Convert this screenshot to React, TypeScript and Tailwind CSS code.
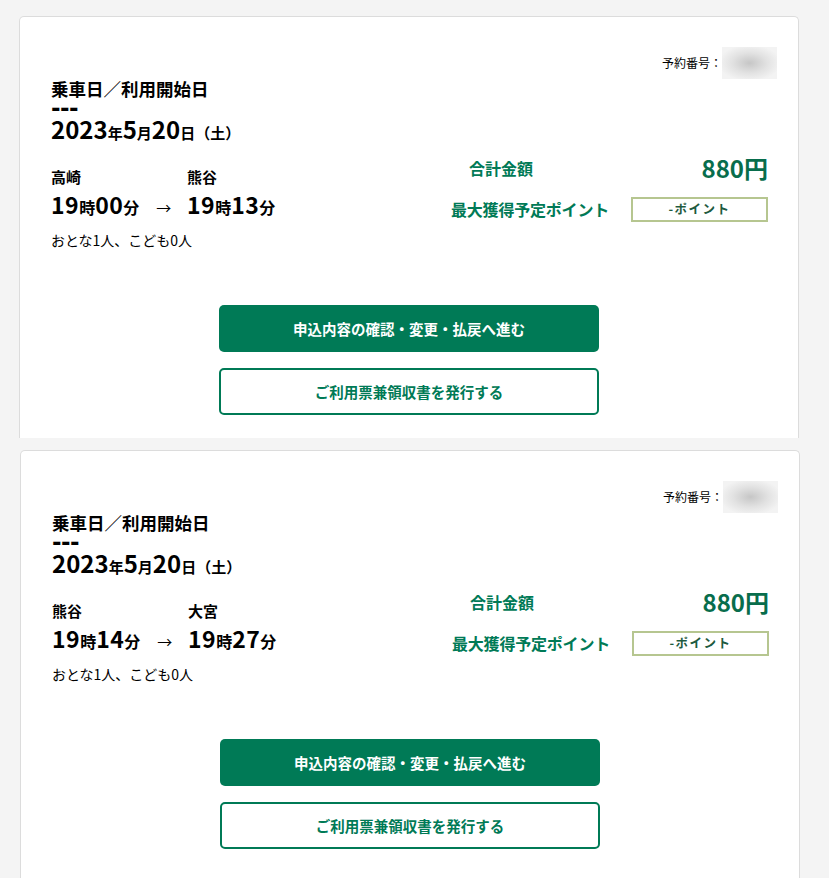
const GREEN = "#007a56";

type Trip = {
  from: string;
  to: string;
  dep: [string, string];
  arr: [string, string];
};

const trips: Trip[] = [
  { from: "高崎", to: "熊谷", dep: ["19", "00"], arr: ["19", "13"] },
  { from: "熊谷", to: "大宮", dep: ["19", "14"], arr: ["19", "27"] },
];

function Time({ t }: { t: [string, string] }) {
  return (
    <span className="whitespace-nowrap">
      <span className="text-[23px] tracking-[0.5px]">{t[0]}</span>
      <span className="text-[16px]">時</span>
      <span className="text-[23px] tracking-[0.5px]">{t[1]}</span>
      <span className="text-[16px]">分</span>
    </span>
  );
}

function ReservationCard({ trip, className }: { trip: Trip; className: string }) {
  return (
    <div
      className={`w-[780px] bg-white border border-b-0 border-[#dcdcdc] rounded-t-[5px] pt-[30px] ${className}`}
    >
      {/* Reservation number */}
      <div className="flex justify-end items-center h-[32px] pr-[21px]">
        <span className="text-[12px] leading-none text-black">予約番号：</span>
        <div className="w-[55px] h-[32px] bg-[radial-gradient(ellipse_at_center,#c6c6c6_0%,#e2e2e2_45%,#f3f3f3_80%)]" />
      </div>

      {/* Body */}
      <div className="flex justify-between pl-[31px] pr-[30px]">
        <div className="flex flex-col text-black">
          <h2 className="text-[17.5px] font-bold leading-[20px]">乗車日／利用開始日</h2>
          <div className="mt-[4px] h-[10px] leading-[10px] text-[23px] font-bold tracking-[-0.5px] font-['DejaVu_Sans',sans-serif]">
            ---
          </div>
          <div className="mt-[2px] font-bold leading-[28px] whitespace-nowrap">
            <span className="text-[24px]">2023</span>
            <span className="text-[15px]">年</span>
            <span className="text-[24px]">5</span>
            <span className="text-[15px]">月</span>
            <span className="text-[24px]">20</span>
            <span className="text-[15px]">日（土）</span>
          </div>
          <div className="mt-[20px] grid grid-cols-[136px_auto] font-bold">
            <div className="text-[15px] leading-[20px]">{trip.from}</div>
            <div className="text-[15px] leading-[20px]">{trip.to}</div>
            <div className="mt-[4px] leading-[26px] flex items-baseline">
              <Time t={trip.dep} />
              <span className="ml-[17px] text-[15px] font-normal">→</span>
            </div>
            <div className="mt-[4px] leading-[26px]">
              <Time t={trip.arr} />
            </div>
          </div>
          <p className="mt-[9px] text-[14px] leading-[20px]">おとな1人、こども0人</p>
        </div>

        <div className="w-[317px] mt-[74px] font-bold" style={{ color: GREEN }}>
          <div className="flex justify-between items-center h-[30px]">
            <span className="pl-[18px] text-[16px] leading-[30px]">合計金額</span>
            <span className="text-[24px] leading-[30px] text-[#086d4c]">880円</span>
          </div>
          <div className="mt-[14px] flex justify-between items-center">
            <span className="text-[16px] leading-[25px] tracking-[-0.2px]">最大獲得予定ポイント</span>
            <div className="w-[137px] h-[25px] border-2 border-[#b6c690] flex items-center justify-center text-[12.5px] tracking-[1.5px] leading-none text-[#1e5a40]">
              -ポイント
            </div>
          </div>
        </div>
      </div>

      {/* Buttons */}
      <div className="mt-[55px] flex flex-col items-center gap-[16px]">
        <button
          className="w-[380px] h-[47px] rounded-[5px] text-white text-[14.5px] font-bold"
          style={{ backgroundColor: GREEN }}
        >
          申込内容の確認・変更・払戻へ進む
        </button>
        <button
          className="w-[380px] h-[47px] rounded-[5px] bg-white border-2 text-[14.5px] font-bold"
          style={{ borderColor: GREEN, color: GREEN }}
        >
          ご利用票兼領収書を発行する
        </button>
      </div>
      <div className="h-[23px]" />
    </div>
  );
}

export default function App() {
  return (
    <div className="min-h-screen bg-[#f4f4f4] pt-[16px] pb-[40px] font-['Noto_Sans_CJK_JP','Noto_Sans',sans-serif]">
      <ReservationCard trip={trips[0]} className="ml-[19px]" />
      <ReservationCard trip={trips[1]} className="ml-[20px] mt-[12px] pb-[30px]" />
    </div>
  );
}
